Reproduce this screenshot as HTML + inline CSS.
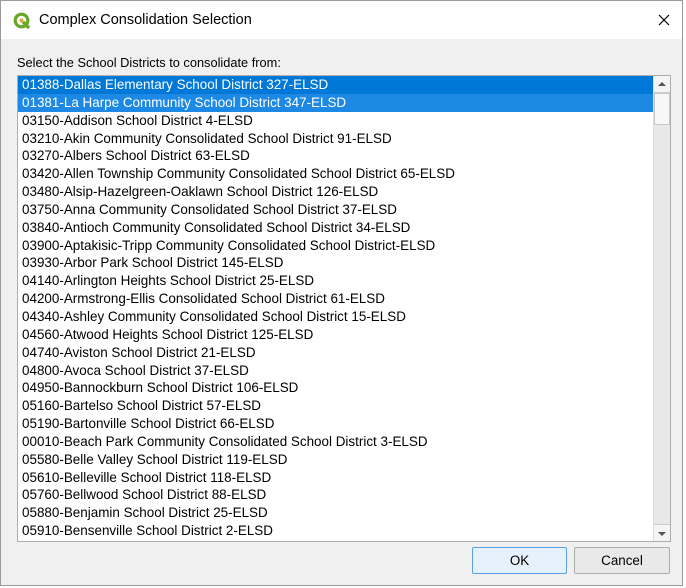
<!DOCTYPE html>
<html><head><style>
*{margin:0;padding:0;box-sizing:border-box}
body{width:686px;height:588px;background:#fff;font-family:"Liberation Sans",sans-serif;position:relative;overflow:hidden}
.win{position:absolute;left:0;top:0;width:683px;height:586px;border:1px solid #9a9a9a;background:#f0f0f0}
.title{position:absolute;left:0;top:0;width:681px;height:38px;background:#fff}
.title span{position:absolute;left:38px;top:11px;font-size:14.5px;color:#000}
.lbl{position:absolute;left:16px;top:54px;font-size:12.8px;color:#000}
.list{position:absolute;left:16px;top:74px;width:654px;height:467px;border:1px solid #adadad;background:#fff;overflow:hidden}
.row{height:17.85px;line-height:17.85px;font-size:13.45px;padding-left:4px;white-space:nowrap;color:#000}
.s1{background:#0078d7;color:#fff}.s2{background:#1e88e5;color:#fff}
.sb{position:absolute;right:0;top:0;width:17px;height:465px;background:#e8e8e8;border-left:1px solid #ddd}
.btn{position:absolute;top:546px;height:27px;border:1px solid #adadad;background:#e9e9e9;font-size:13.4px;text-align:center;line-height:25px;border-radius:2px}
</style></head><body>
<div class="win">
<div class="title">
<svg style="position:absolute;left:12px;top:11px" width="18" height="18" viewBox="0 0 18 18"><circle cx="8.5" cy="8.5" r="6.3" fill="none" stroke="#6aa628" stroke-width="3.2"/><path d="M10 10 L16 16" stroke="#6aa628" stroke-width="3.4"/><circle cx="8.5" cy="8.5" r="2" fill="#e8a33b"/></svg>
<span>Complex Consolidation Selection</span>
<svg style="position:absolute;left:657px;top:13px" width="12" height="12"><path d="M1 1L11 11M11 1L1 11" stroke="#000" stroke-width="1.2"/></svg>
</div>
<div class="lbl">Select the School Districts to consolidate from:</div>
<div class="list">
<div class="row s1">01388-Dallas Elementary School District 327-ELSD</div>
<div class="row s2">01381-La Harpe Community School District 347-ELSD</div>
<div class="row">03150-Addison School District 4-ELSD</div>
<div class="row">03210-Akin Community Consolidated School District 91-ELSD</div>
<div class="row">03270-Albers School District 63-ELSD</div>
<div class="row">03420-Allen Township Community Consolidated School District 65-ELSD</div>
<div class="row">03480-Alsip-Hazelgreen-Oaklawn School District 126-ELSD</div>
<div class="row">03750-Anna Community Consolidated School District 37-ELSD</div>
<div class="row">03840-Antioch Community Consolidated School District 34-ELSD</div>
<div class="row">03900-Aptakisic-Tripp Community Consolidated School District-ELSD</div>
<div class="row">03930-Arbor Park School District 145-ELSD</div>
<div class="row">04140-Arlington Heights School District 25-ELSD</div>
<div class="row">04200-Armstrong-Ellis Consolidated School District 61-ELSD</div>
<div class="row">04340-Ashley Community Consolidated School District 15-ELSD</div>
<div class="row">04560-Atwood Heights School District 125-ELSD</div>
<div class="row">04740-Aviston School District 21-ELSD</div>
<div class="row">04800-Avoca School District 37-ELSD</div>
<div class="row">04950-Bannockburn School District 106-ELSD</div>
<div class="row">05160-Bartelso School District 57-ELSD</div>
<div class="row">05190-Bartonville School District 66-ELSD</div>
<div class="row">00010-Beach Park Community Consolidated School District 3-ELSD</div>
<div class="row">05580-Belle Valley School District 119-ELSD</div>
<div class="row">05610-Belleville School District 118-ELSD</div>
<div class="row">05760-Bellwood School District 88-ELSD</div>
<div class="row">05880-Benjamin School District 25-ELSD</div>
<div class="row">05910-Bensenville School District 2-ELSD</div>
<div class="sb">
<div style="position:absolute;left:0;top:0;width:16px;height:17px;background:#f4f4f4;border-bottom:1px solid #ccc"><svg width="16" height="17"><path d="M4 10L8 6L12 10Z" fill="#555"/></svg></div>
<div style="position:absolute;left:0;top:17px;width:16px;height:32px;background:#f7f7f7;border:1px solid #c8c8c8"></div>
<div style="position:absolute;left:0;bottom:0;width:16px;height:17px;background:#f4f4f4;border-top:1px solid #ccc"><svg width="16" height="17"><path d="M4 7L8 11L12 7Z" fill="#555"/></svg></div>
</div>
</div>
<div class="btn" style="left:471px;width:95px;border-color:#5aa0e0;background:#e5f1fb">OK</div>
<div class="btn" style="left:573px;width:96px">Cancel</div>
</div>
</body></html>
